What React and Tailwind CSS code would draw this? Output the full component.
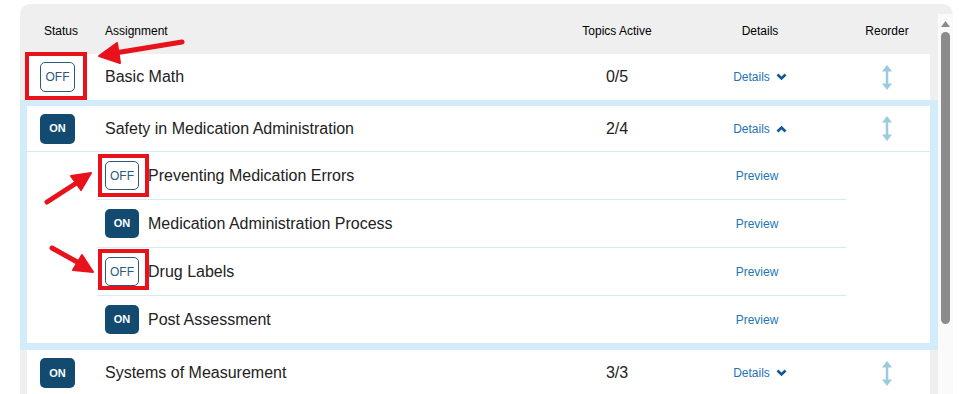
import React from 'react';

const rows = [
  { on: false, title: 'Basic Math', topics: '0/5', open: false },
  {
    on: true,
    title: 'Safety in Medication Administration',
    topics: '2/4',
    open: true,
    children: [
      { on: false, title: 'Preventing Medication Errors' },
      { on: true, title: 'Medication Administration Process' },
      { on: false, title: 'Drug Labels' },
      { on: true, title: 'Post Assessment' },
    ],
  },
  { on: true, title: 'Systems of Measurement', topics: '3/3', open: false },
];

function Toggle({ on, small }) {
  const size = small ? 'w-[34px] h-[29px]' : 'w-[35px] h-[30px]';
  if (on) {
    return (
      <span className={`${size} flex items-center justify-center rounded-[5px] bg-[#134a70] text-white text-[11px] font-bold`}>
        ON
      </span>
    );
  }
  return (
    <span className={`${size} flex items-center justify-center rounded-[5px] border border-[#2a5a7c] bg-white text-[#2a5a7c] text-[12px]`}>
      OFF
    </span>
  );
}

function Chevron({ up }) {
  return (
    <svg width="11" height="8" viewBox="0 0 11 8" className="ml-[6px]">
      <polyline
        points={up ? '1.5,6.5 5.5,2.5 9.5,6.5' : '1.5,1.5 5.5,5.5 9.5,1.5'}
        fill="none"
        stroke="#0f5a95"
        strokeWidth="2.6"
      />
    </svg>
  );
}

function ReorderIcon() {
  return (
    <svg width="12" height="25" viewBox="0 0 12 25">
      <polygon points="6,0 11,6.5 1,6.5" fill="#9ccbe0" />
      <rect x="4.75" y="5" width="2.5" height="15" fill="#9ccbe0" />
      <polygon points="6,25 11,18.5 1,18.5" fill="#9ccbe0" />
    </svg>
  );
}

function MainRow({ row }) {
  return (
    <div className={`grid grid-cols-[68px_463px_118px_168px_86px] items-center bg-white h-[46px] ${row.open ? 'border-b border-[#d6ebf7]' : ''}`}>
      <div className="pl-[13px]">
        <Toggle on={row.on} />
      </div>
      <div className="pl-[10px] text-[16px] text-[#222]">{row.title}</div>
      <div className="text-center text-[16px] text-[#222]">{row.topics}</div>
      <div className="flex items-center justify-center text-[12px] text-[#1f74b4]">
        Details
        <Chevron up={row.open} />
      </div>
      <div className="flex justify-center">
        <ReorderIcon />
      </div>
    </div>
  );
}

function SubRow({ item, first }) {
  return (
    <div className={`grid grid-cols-[579px_170px] items-center ${first ? 'h-[47px]' : 'border-t border-[#d6ebf7] h-[48px]'}`}>
      <div className="flex items-center pl-[8px]">
        <Toggle on={item.on} small />
        <span className="ml-[9px] text-[16px] text-[#222]">{item.title}</span>
      </div>
      <div className="text-center text-[12px] text-[#1f74b4] pr-[8px]">Preview</div>
    </div>
  );
}

export default function App() {
  return (
    <div className="relative w-[959px] h-[394px] overflow-hidden bg-white font-['Liberation_Sans',Arial,sans-serif]">
      <div className="ml-[20px] mt-[4px] w-[933px] flex rounded-t-[10px] bg-[#efefef]">
        <div className="w-[918px]">
          <div className="grid grid-cols-[68px_463px_118px_168px_86px] items-center h-[50px] pl-[7px] pr-[8px] pt-[4px] text-[12px] text-black">
            <div className="text-center">Status</div>
            <div className="pl-[10px]">Assignment</div>
            <div className="text-center">Topics Active</div>
            <div className="text-center">Details</div>
            <div className="text-center">Reorder</div>
          </div>
          {rows.map((row) =>
            row.open ? (
              <div key={row.title} className="bg-[#d3ecfa] pt-[6px] pb-[7px] pl-[7px] pr-[8px]">
                <div className="bg-white">
                  <MainRow row={row} />
                  <div className="ml-[70px] w-[749px]">
                    {row.children.map((c, i) => (
                      <SubRow key={c.title} item={c} first={i === 0} />
                    ))}
                  </div>
                </div>
              </div>
            ) : (
              <div key={row.title} className="pl-[7px] pr-[8px]">
                <MainRow row={row} />
              </div>
            )
          )}
        </div>
        <div className="w-[15px] mt-[10px] bg-[#fafafa] flex flex-col items-center">
          <svg width="9" height="6" viewBox="0 0 9 6" className="mt-[7px]">
            <polygon points="4.5,0 9,6 0,6" fill="#8a8a8a" />
          </svg>
          <div className="mt-[5px] w-[9px] h-[292px] rounded-full bg-[#8c8c8c]" />
        </div>
      </div>

      {/* screenshot annotations */}
      <svg className="absolute inset-0 pointer-events-none" width="959" height="394" viewBox="0 0 959 394">
        <g fill="none" stroke="#e8121c" strokeWidth="4">
          <rect x="27" y="54" width="58" height="44" />
          <rect x="100" y="156" width="47" height="39" />
          <rect x="100" y="251" width="47" height="37" />
        </g>
        <g stroke="#e8121c" strokeWidth="5" strokeLinecap="round" fill="#e8121c">
          <line x1="182" y1="42" x2="115" y2="53" />
          <line x1="47" y1="202" x2="78" y2="182" />
          <line x1="52" y1="248" x2="79" y2="263" />
        </g>
        <g fill="#e8121c" stroke="#e8121c" strokeWidth="2" strokeLinejoin="round">
          <polygon points="99,56 120,63 117,43" />
          <polygon points="91,173 81,190 71,176" />
          <polygon points="93,272 73,270 82,255" />
        </g>
      </svg>
    </div>
  );
}
